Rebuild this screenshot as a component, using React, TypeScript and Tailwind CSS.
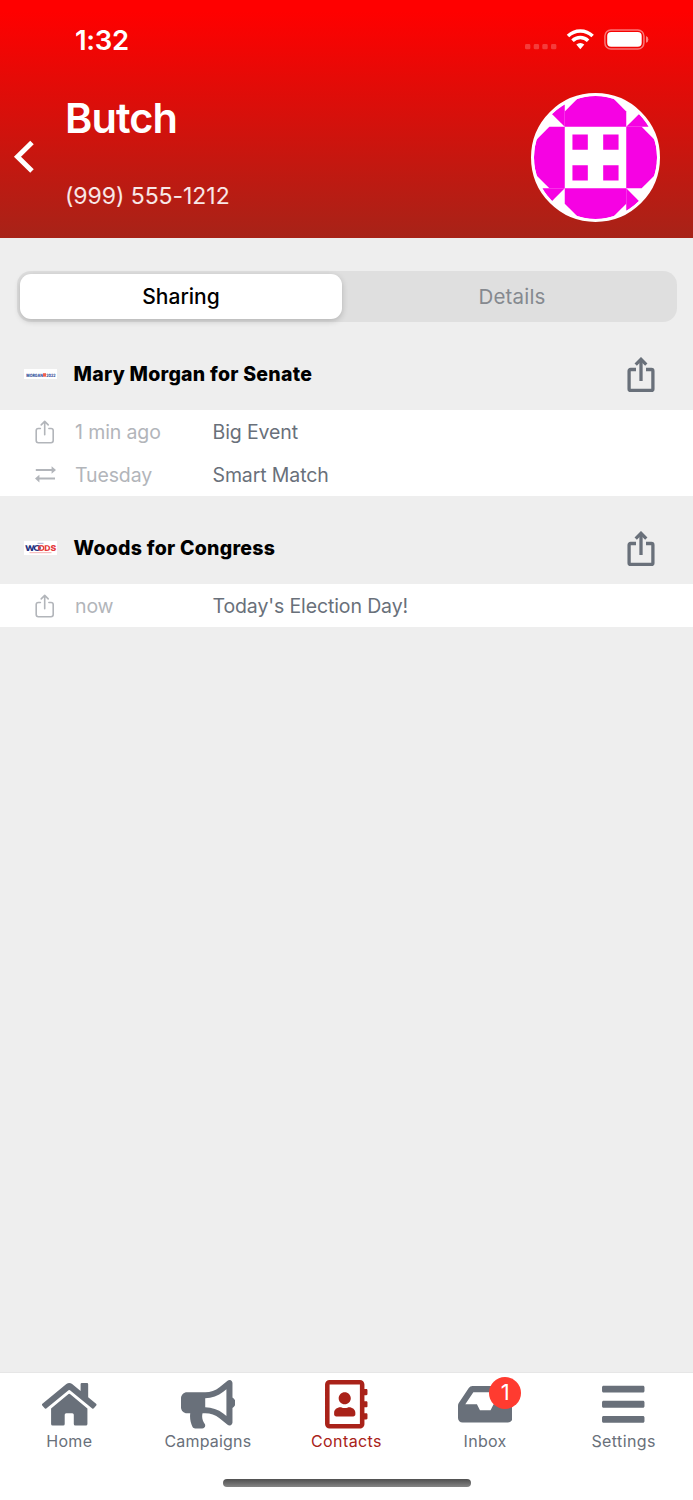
import type { ReactNode } from "react";
import { FaBars, FaBullhorn, FaHome, FaInbox, FaRegAddressBook } from "react-icons/fa";

type Activity = { kind: "share" | "match"; when: string; title: string };

type Campaign = { name: string; logo: ReactNode; activity: Activity[] };

const campaigns: Campaign[] = [
  {
    name: "Mary Morgan for Senate",
    logo: <MorganLogo />,
    activity: [
      { kind: "share", when: "1 min ago", title: "Big Event" },
      { kind: "match", when: "Tuesday", title: "Smart Match" },
    ],
  },
  {
    name: "Woods for Congress",
    logo: <WoodsLogo />,
    activity: [{ kind: "share", when: "now", title: "Today's Election Day!" }],
  },
];

const tabs = [
  { label: "Home", icon: FaHome, tracking: "tracking-[0.3px]" },
  { label: "Campaigns", icon: FaBullhorn, tracking: "tracking-[0.2px]" },
  { label: "Contacts", icon: FaRegAddressBook, tracking: "tracking-[0.4px]", active: true },
  { label: "Inbox", icon: FaInbox, tracking: "tracking-[0.3px]", badge: 1 },
  { label: "Settings", icon: FaBars, tracking: "tracking-[0.4px]" },
];

function MorganLogo() {
  return (
    <svg width="33" height="10" viewBox="0 0 33 10">
      <rect width="33" height="10" fill="#fff" />
      <g fontFamily="Inter, sans-serif" fontWeight="800" fontSize="4.4" textRendering="geometricPrecision">
        <text x="2.3" y="7.6" fill="#34509a" textLength="16.6" lengthAdjust="spacingAndGlyphs">MORGAN</text>
        <text x="22.3" y="7.6" fill="#34509a" textLength="9.2" lengthAdjust="spacingAndGlyphs">2022</text>
      </g>
      <rect x="19" y="4.2" width="3" height="3.5" fill="#f0604d" />
    </svg>
  );
}

function WoodsLogo() {
  return (
    <svg width="33" height="14" viewBox="0 0 33 14">
      <rect width="33" height="14" fill="#fff" />
      <g fontFamily="Inter, sans-serif" fontWeight="800" fontSize="8" textRendering="geometricPrecision">
        <text x="1" y="9.9" fill="#25307c" textLength="9.8" lengthAdjust="spacingAndGlyphs">W</text>
        <text x="20.2" y="9.9" fill="#e53a3e" textLength="12" lengthAdjust="spacingAndGlyphs">DS</text>
      </g>
      <ellipse cx="13.3" cy="7" rx="2.8" ry="2.4" fill="none" stroke="#25307c" strokeWidth="1.3" />
      <ellipse cx="17.1" cy="7" rx="2.6" ry="2.4" fill="none" stroke="#e53a3e" strokeWidth="1.3" />
      <path d="M13.5 2.3h6" stroke="#8b92c0" strokeWidth=".8" />
      <path d="M5.5 11.7h22" stroke="#f09a9c" strokeWidth=".8" />
    </svg>
  );
}

function ShareBold() {
  return (
    <svg className="mt-px" width="28" height="36" viewBox="0 0 28 36" fill="none" stroke="#69707a" strokeWidth="3.3">
      <path d="M9 12.5H3.6Q2.1 12.5 2.1 14V31.9Q2.1 33.4 3.6 33.4H24.4Q25.9 33.4 25.9 31.9V14Q25.9 12.5 24.4 12.5H19" />
      <path d="M14 24V3" />
      <path d="M8.7 7.6L14 2.3L19.3 7.6" />
    </svg>
  );
}

function ShareThin() {
  return (
    <svg width="20" height="24" viewBox="0 0 20 24" fill="none" stroke="#b2b5ba" strokeWidth="1.6" strokeLinecap="round" strokeLinejoin="round">
      <path d="M5.4 8.5H3.3Q1.2 8.5 1.2 10.6V20.5Q1.2 22.7 3.3 22.7H16Q18.2 22.7 18.2 20.5V10.6Q18.2 8.5 16 8.5H13.9" />
      <path d="M9.7 14.7V1.5M6.2 4.9L9.7 1.4L13.2 4.9" />
    </svg>
  );
}

function SwapArrows() {
  return (
    <svg width="22" height="17" viewBox="0 0 22 17" fill="#b2b5ba">
      <path d="M.8 3H16.6V.2L21 4L16.6 7.8V5H.8Z" />
      <path d="M20 11.6H4.4V8.8L0 12.6L4.4 16.4V13.6H20Z" />
    </svg>
  );
}

function StatusIcons() {
  return (
    <svg width="125" height="24" viewBox="0 1 125 24">
      <g fill="#fff" fillOpacity=".22">
        <rect x="1" y="17" width="5.4" height="5.3" rx="1.4" />
        <rect x="9.7" y="17" width="5.4" height="5.3" rx="1.4" />
        <rect x="18.3" y="17" width="5.4" height="5.3" rx="1.4" />
        <rect x="27" y="17" width="5.4" height="5.3" rx="1.4" />
      </g>
      <g fill="none" stroke="#fff" strokeWidth="3.5">
        <path d="M44 9.1A17.3 17.3 0 0 1 68.6 9.1" />
        <path d="M48.5 13.8A11 11 0 0 1 64.1 13.8" />
      </g>
      <path d="M52.3 17.6A6 6 0 0 1 60.3 17.6L56.3 22.2Z" fill="#fff" />
      <rect x="80.9" y="2.9" width="39" height="19.2" rx="6" fill="none" stroke="#fff" strokeOpacity=".45" strokeWidth="1.5" />
      <rect x="83.2" y="5.1" width="34.5" height="14.7" rx="4" fill="#fff" />
      <path d="M122 9Q124.4 9.8 124.4 12.4Q124.4 15 122 15.8Z" fill="#fff" fillOpacity=".5" />
    </svg>
  );
}

function Avatar() {
  return (
    <div className="size-[129px] rounded-full border-3 border-white bg-white overflow-hidden">
      <svg className="size-full rounded-full" viewBox="0 0 8 8" fill="#f602e3">
        {[0, 90, 180, 270].map((angle) => (
          <g key={angle} transform={`rotate(${angle} 4 4)`}>
            <path d="M2 1L3 0H5L6 1V2H2Z" />
            <path d="M2 2L1 1L2 0Z" />
          </g>
        ))}
        <path d="M2.5 2.5h1v1h-1zM4.5 2.5h1v1h-1zM2.5 4.5h1v1h-1zM4.5 4.5h1v1h-1z" />
      </svg>
    </div>
  );
}

function Header() {
  return (
    <header className="h-[238px] bg-linear-to-b/srgb from-[#ff0000] from-5% to-[#a72318] text-white">
      <div className="h-[79px] pl-[75px] pr-[44px] flex items-center justify-between">
        <span className="text-[27.5px] leading-8 font-semibold tracking-[-0.3px]">1:32</span>
        <StatusIcons />
      </div>
      <div className="flex items-start pl-[13px] pr-[33px] pt-[14px]">
        <svg className="mt-[47px] shrink-0" width="22" height="34" viewBox="0 0 22 34" fill="none" stroke="#fff" strokeWidth="5">
          <path d="M19 2.5L4.5 16.8L19 31" />
        </svg>
        <div className="ml-[30px] grow">
          <h1 className="text-[41.5px] leading-[50px] font-semibold tracking-[-0.9px]">Butch</h1>
          <p className="mt-[37px] text-[23px] leading-8 tracking-[-0.05px] text-white/90">(999) 555-1212</p>
        </div>
        <Avatar />
      </div>
    </header>
  );
}

function SegmentedControl() {
  return (
    <div className="ml-[17px] mr-4 mt-[33px] h-[51px] flex rounded-[14px] bg-[#dfdfdf] p-[3px] leading-[46px] text-center">
      <button className="w-[322px] rounded-[11px] bg-white text-[21px] font-medium text-black shadow-[0_2px_6px_rgba(0,0,0,0.2)]">Sharing</button>
      <button className="grow pl-2 text-[20.5px] text-[#85898f] tracking-[0.2px]">Details</button>
    </div>
  );
}

function CampaignSection({ name, logo, activity }: Campaign) {
  return (
    <section>
      <div className="h-[87.5px] pt-[17px] pl-6 pr-[38px] flex items-center">
        {logo}
        <h2 className="ml-[16.5px] pt-px grow text-[19.5px] font-extrabold tracking-[0.26px] text-black">{name}</h2>
        <ShareBold />
      </div>
      <ul className="pt-px bg-white text-[19.5px] tracking-[-0.12px]">
        {activity.map((item) => (
          <li key={item.title} className="h-[42.8px] pl-[35px] flex items-center">
            <span className="w-10 shrink-0">{item.kind === "share" ? <ShareThin /> : <SwapArrows />}</span>
            <span className="pt-0.5 w-[137.5px] shrink-0 text-[#b2b5ba]">{item.when}</span>
            <span className="pt-0.5 text-[#69707a]">{item.title}</span>
          </li>
        ))}
      </ul>
    </section>
  );
}

function TabBar() {
  return (
    <footer className="h-32 bg-white border-t border-[#e6e6e6] flex flex-col">
      <nav className="grid grid-cols-5 pt-[7px]">
        {tabs.map(({ label, icon: Icon, tracking, active, badge }) => (
          <div key={label} className={`flex flex-col items-center ${active ? "text-[#a92219]" : "text-[#69707a]"}`}>
            <span className="relative">
              <Icon className="h-[48.5px] w-[54.5px]" />
              {badge && (
                <span className="absolute -top-[3px] -right-[9px] size-8 rounded-full bg-[#ff3b30] text-white text-[22px] leading-[31px] text-center">
                  {badge}
                </span>
              )}
            </span>
            <span className={`mt-[1.5px] text-base leading-[22px] ${tracking}`}>{label}</span>
          </div>
        ))}
      </nav>
      <div className="mt-auto mb-[13px] mx-auto h-2 w-[248px] rounded-full bg-linear-to-b from-[#505050] to-[#858585]" />
    </footer>
  );
}

export default function App() {
  return (
    <div className="w-[693px] h-[1500px] flex flex-col bg-[#eeeeee] font-['Inter',sans-serif]">
      <Header />
      <main className="grow">
        <SegmentedControl />
        {campaigns.map((campaign) => (
          <CampaignSection key={campaign.name} {...campaign} />
        ))}
      </main>
      <TabBar />
    </div>
  );
}
